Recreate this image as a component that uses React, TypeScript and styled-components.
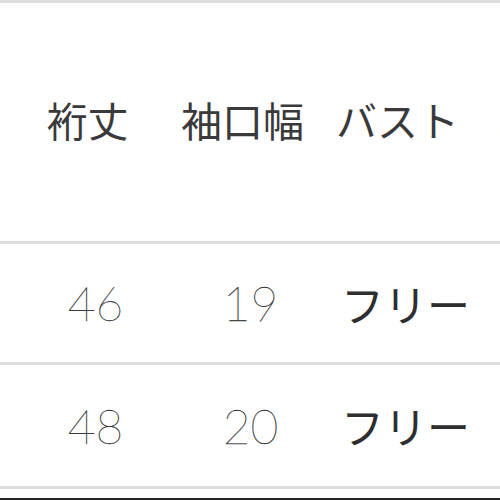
import React from "react";
import styled, { createGlobalStyle } from "styled-components";

const Global = createGlobalStyle`
  html, body { margin: 0; padding: 0; background: #fff; }
  body { width: 500px; height: 500px; overflow: hidden; }
`;

const Page = styled.div`
  width: 500px;
  height: 500px;
  overflow: hidden;
  background: #fff;
`;

const Table = styled.div`
  width: 700px;
  display: flex;
  flex-direction: column;
  border-top: 3px solid #dedede;
`;

const Row = styled.div<{ $h: number; $shift: number }>`
  display: grid;
  grid-template-columns: repeat(4, 155px);
  height: ${(p) => p.$h}px;
  padding-left: ${(p) => p.$shift}px;
  border-bottom: 3px solid #dedede;
  align-items: center;
`;

const HeadCell = styled.div<{ $dy?: number; $faint?: boolean }>`
  text-align: center;
  font-family: "Noto Sans CJK JP", "Noto Sans", sans-serif;
  font-size: 41px;
  font-weight: 400;
  color: ${(p) => (p.$faint ? "#d0d0d0" : "#3a3a3a")};
  line-height: 1;
  white-space: nowrap;
  transform: translateY(${(p) => p.$dy ?? -3}px);
`;

const NumCell = styled.div`
  text-align: center;
  font-family: Lato, "Open Sans", sans-serif;
  font-size: 48px;
  font-weight: 100;
  color: #1e1e1e;
  line-height: 1;
  -webkit-text-stroke: 0.3px #3a3a3a;
`;

const KanaCell = styled.div`
  text-align: center;
  font-family: "Noto Sans CJK JP", "Noto Sans", sans-serif;
  font-size: 43px;
  font-weight: 400;
  color: #2e2e2e;
  line-height: 1;
  white-space: nowrap;
`;

const Gap = styled.div`
  height: 9px;
`;

const DarkRule = styled.div`
  height: 2px;
  background: #222;
`;

const rows = [
  { a: "46", b: "19", c: "フリー", h: 118 },
  { a: "48", b: "20", c: "フリー", h: 121 },
];

export default function App() {
  return (
    <Page>
      <Global />
      <Table>
        <Row $h={238} $shift={10}>
          <HeadCell>裄丈</HeadCell>
          <HeadCell>袖口幅</HeadCell>
          <HeadCell>バスト</HeadCell>
          <HeadCell $faint>ヒップ</HeadCell>
        </Row>
        {rows.map((r, i) => (
          <Row key={i} $h={r.h} $shift={18}>
            <NumCell>{r.a}</NumCell>
            <NumCell>{r.b}</NumCell>
            <KanaCell>{r.c}</KanaCell>
            <KanaCell />
          </Row>
        ))}
        <Gap />
        <DarkRule />
      </Table>
    </Page>
  );
}
